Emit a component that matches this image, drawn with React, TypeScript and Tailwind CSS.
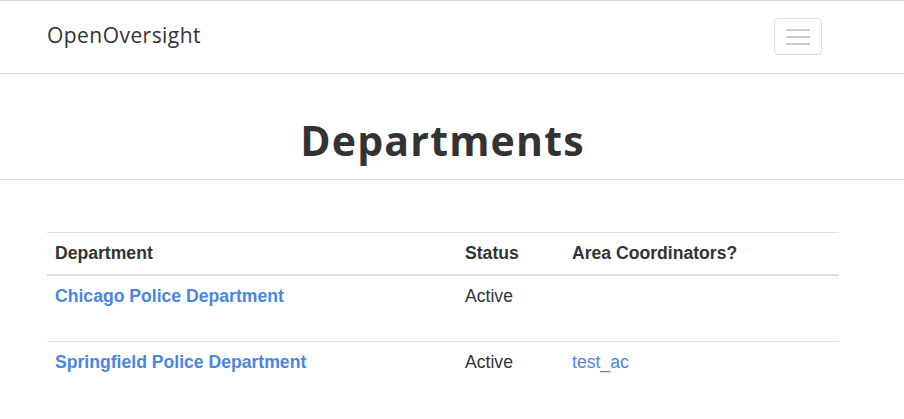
import React from "react";

export default function App() {
  const rows = [
    { name: "Chicago Police Department", status: "Active", ac: "" },
    { name: "Springfield Police Department", status: "Active", ac: "test_ac" },
  ];
  return (
    <div className="min-h-[419px] bg-white text-[#333]" style={{ fontFamily: '"Liberation Sans", Arial, sans-serif' }}>
      <nav className="h-[74px] border-t border-b border-[#d6d6d6] flex items-start justify-between pl-[47px] pr-[82px] pt-[17px]">
        <span className="mt-[2px] text-[21px] leading-[30px] text-[#333] font-['Open_Sans',sans-serif] tracking-[0.45px]">OpenOversight</span>
        <button className="w-[48px] h-[37px] border border-[#ddd] rounded-[4px] flex flex-col items-center justify-center gap-[5px]">
          <span className="block w-[24px] h-[2px] bg-[#ccc]" />
          <span className="block w-[24px] h-[2px] bg-[#ccc]" />
          <span className="block w-[24px] h-[2px] bg-[#ccc]" />
        </button>
      </nav>
      <div className="border-b border-[#ddd] pt-[44px] pb-[17px] flex justify-center pr-[19px]">
        <h1 className="text-[41px] font-bold font-['Open_Sans',sans-serif] leading-[44px] tracking-[1.2px] text-[#333]">Departments</h1>
      </div>
      <div className="px-[47px] pt-[52px]">
        <table className="w-[792px] text-[17.6px] leading-[25px] border-collapse">
          <thead>
            <tr className="border-t border-[#ddd]">
              <th className="text-left font-bold px-[8px] py-[8px] w-[410px] border-b-2 border-[#ddd]">Department</th>
              <th className="text-left font-bold px-[8px] py-[8px] w-[107px] border-b-2 border-[#ddd]">Status</th>
              <th className="text-left font-bold px-[8px] py-[8px] border-b-2 border-[#ddd]">Area Coordinators?</th>
            </tr>
          </thead>
          <tbody>
            {rows.map((r, i) => (
              <tr key={r.name} className={i > 0 ? "border-t border-[#ddd]" : ""}>
                <td className="px-[8px] pt-[8px] pb-[32px] align-top">
                  <a className="font-bold text-[#4786e6]">{r.name}</a>
                </td>
                <td className="px-[8px] pt-[8px] align-top">{r.status}</td>
                <td className="px-[8px] pt-[8px] align-top">
                  {r.ac && <a className="text-[#4786e6]">{r.ac}</a>}
                </td>
              </tr>
            ))}
          </tbody>
        </table>
      </div>
    </div>
  );
}
